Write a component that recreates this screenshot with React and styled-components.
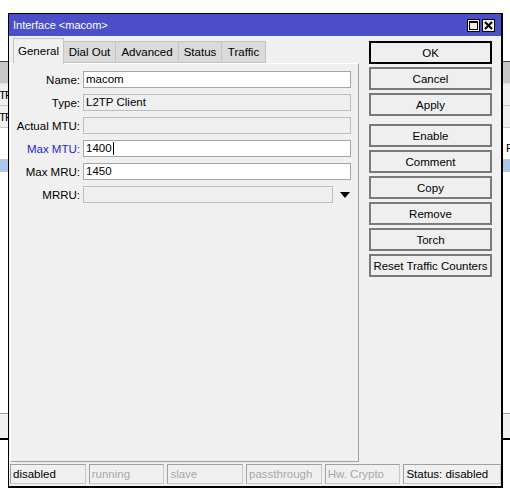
import React from 'react';
import styled, { createGlobalStyle } from 'styled-components';

const fields = [
  { label: 'Name', value: 'macom', editable: true },
  { label: 'Type', value: 'L2TP Client' },
  { label: 'Actual MTU', value: '' },
  { label: 'Max MTU', value: '1400', editable: true, active: true },
  { label: 'Max MRU', value: '1450', editable: true },
  { label: 'MRRU', value: '', drop: true },
];

const tabs = [
  { name: 'General', w: 51 },
  { name: 'Dial Out', w: 52 },
  { name: 'Advanced', w: 63 },
  { name: 'Status', w: 43 },
  { name: 'Traffic', w: 44 },
];

const buttons = [
  ['OK', 'Cancel', 'Apply'],
  ['Enable', 'Comment', 'Copy', 'Remove', 'Torch', 'Reset Traffic Counters'],
];

const status = [
  { text: 'disabled', on: true, w: 76 },
  { text: 'running', w: 76 },
  { text: 'slave', w: 76 },
  { text: 'passthrough', w: 76 },
  { text: 'Hw. Crypto', w: 76 },
  { text: 'Status: disabled', on: true, w: 98 },
];

const App = () => (
  <>
    <GlobalStyle />
    <Desktop>
      {/* 뒤쪽 창 */}
      <BackWindow>
        <BackHeader />
        <BackRow $bg="#f0f0f0" $h={22}>
          <span>TF</span>
        </BackRow>
        <BackRow $bg="#f0f0f0" $h={22}>
          <span>TP</span>
        </BackRow>
        <BackRow $bg="#fff" $h={32} $end>
          <span />
          <span>F</span>
        </BackRow>
        <BackRow $bg="#a9c6ec" $h={12} />
      </BackWindow>

      <Dialog>
        <TitleBar>
          <span>Interface &lt;macom&gt;</span>
          <TitleButtons>
            <TitleBtn>
              <svg width="11" height="11" viewBox="0 0 11 11">
                <rect x="1.5" y="1.5" width="8" height="8" fill="none" stroke="#000" />
                <rect x="1" y="1" width="9" height="2" fill="#000" />
              </svg>
            </TitleBtn>
            <TitleBtn>
              <svg width="11" height="11" viewBox="0 0 11 11">
                <path d="M2 2 L9 9 M9 2 L2 9" stroke="#000" strokeWidth="2" />
              </svg>
            </TitleBtn>
          </TitleButtons>
        </TitleBar>

        <Body>
          <LeftColumn>
            <TabRow>
              {tabs.map((t, i) => (
                <Tab key={t.name} $active={i === 0} $w={t.w}>
                  {t.name}
                </Tab>
              ))}
            </TabRow>
            <Panel>
              {fields.map((f) => (
                <FieldRow key={f.label}>
                  <Label $active={f.active}>{f.label}:</Label>
                  <Input $editable={f.editable} $drop={f.drop}>
                    {f.value}
                    {f.active && <Caret />}
                  </Input>
                  {f.drop && <DropArrow />}
                </FieldRow>
              ))}
            </Panel>
          </LeftColumn>

          <ButtonColumn>
            {buttons.map((group, gi) => (
              <ButtonGroup key={gi}>
                {group.map((b) => (
                  <Button key={b} $default={b === 'OK'}>
                    {b}
                  </Button>
                ))}
              </ButtonGroup>
            ))}
          </ButtonColumn>
        </Body>

        <StatusBar>
          {status.map((s) => (
            <StatusCell key={s.text} $on={s.on} $w={s.w}>
              {s.text}
            </StatusCell>
          ))}
        </StatusBar>
      </Dialog>
    </Desktop>
  </>
);

const GlobalStyle = createGlobalStyle`
  html, body {
    margin: 0;
    padding: 0;
    background: #fff;
  }
  body {
    font-family: "Liberation Sans", Arial, sans-serif;
    font-size: 11px;
    color: #000;
  }
`;

const Desktop = styled.div`
  position: relative;
  width: 510px;
  height: 496px;
  overflow: hidden;
`;

const BackWindow = styled.div`
  position: absolute;
  left: -4px;
  top: 61px;
  width: 518px;
  height: 376px;
  background: #fff;
  border-top: 1px solid #444;
  border-bottom: 2px solid #000;
  box-shadow: inset 0 -24px 0 #f0f0f0, inset 0 -25px 0 #a0a0a0;
  display: flex;
  flex-direction: column;
`;

const BackHeader = styled.div`
  height: 21px;
  background: #c8c8c8;
  border-bottom: 1px solid #e0e0e0;
`;

const BackRow = styled.div`
  height: ${(p) => p.$h}px;
  box-sizing: border-box;
  background: ${(p) => p.$bg};
  border-bottom: 1px solid #c8c8c8;
  display: flex;
  justify-content: space-between;
  align-items: ${(p) => (p.$end ? 'flex-end' : 'center')};
  padding: 0 2px ${(p) => (p.$end ? 5 : 0)}px 3px;
  font-size: 11.5px;
  letter-spacing: -1px;
`;

const Dialog = styled.div`
  position: absolute;
  left: 8px;
  top: 13px;
  width: 492px;
  height: 472px;
  background: #f0f0f0;
  border: 1px solid #000;
  border-right-width: 2px;
  border-bottom-width: 2px;
  display: flex;
  flex-direction: column;
`;

const TitleBar = styled.div`
  height: 22px;
  background: #4b50c8;
  color: #fff;
  font-size: 11px;
  display: flex;
  align-items: center;
  justify-content: space-between;
  padding: 0 6px 0 4px;
  flex-shrink: 0;
`;

const TitleButtons = styled.div`
  display: flex;
  gap: 2px;
`;

const TitleBtn = styled.div`
  width: 13px;
  height: 13px;
  background: #f0f0f0;
  border: 1px solid #000;
  box-sizing: border-box;
  display: flex;
  align-items: center;
  justify-content: center;
`;

const Body = styled.div`
  flex: 1;
  display: flex;
  padding: 1px 0 0 1px;
  min-height: 0;
`;

const LeftColumn = styled.div`
  width: 349px;
  display: flex;
  flex-direction: column;
`;

const TabRow = styled.div`
  display: flex;
  align-items: flex-end;
  height: 26px;
  padding-left: 3px;
  position: relative;
  z-index: 1;
`;

const Tab = styled.div`
  width: ${(p) => p.$w}px;
  height: ${(p) => (p.$active ? 26 : 22)}px;
  box-sizing: border-box;
  display: flex;
  align-items: center;
  justify-content: center;
  font-size: 11.5px;
  white-space: nowrap;
  background: ${(p) => (p.$active ? '#f0f0f0' : '#dadada')};
  border: 1px solid #c4c4c4;
  border-bottom: ${(p) => (p.$active ? '1px solid #f0f0f0' : '1px solid #c4c4c4')};
  margin-bottom: ${(p) => (p.$active ? -1 : 0)}px;
  & + & {
    border-left: none;
  }
`;

const Panel = styled.div`
  flex: 1;
  border: 1px solid #c4c4c4;
  border-left-color: #fff;
  border-top-color: #fff;
  border-right-color: #a0a0a0;
  border-bottom-color: #a0a0a0;
  padding: 7px 0 0 0;
  display: flex;
  flex-direction: column;
  gap: 6px;
`;

const FieldRow = styled.div`
  display: flex;
  align-items: center;
  height: 17px;
`;

const Label = styled.div`
  width: 69px;
  text-align: right;
  padding-right: 3px;
  font-size: 11.5px;
  color: ${(p) => (p.$active ? '#1d24e0' : '#000')};
`;

const Input = styled.div`
  width: ${(p) => (p.$drop ? 250 : 268)}px;
  height: 17px;
  box-sizing: border-box;
  border: 1px solid ${(p) => (p.$editable ? '#a6a6a6' : '#bdbdbd')};
  background: ${(p) => (p.$editable ? '#fff' : '#f0f0f0')};
  padding: 0 2px;
  font-size: 11.5px;
  line-height: 15px;
  display: flex;
  align-items: center;
  color: #000;
`;

const Caret = styled.span`
  display: inline-block;
  width: 1px;
  height: 13px;
  background: #000;
  margin-left: 1px;
`;

const DropArrow = styled.span`
  margin-left: 7px;
  width: 0;
  height: 0;
  border-left: 5px solid transparent;
  border-right: 5px solid transparent;
  border-top: 6px solid #000;
`;

const ButtonColumn = styled.div`
  margin-left: 10px;
  padding-top: 4px;
  width: 123px;
  display: flex;
  flex-direction: column;
  gap: 8px;
`;

const ButtonGroup = styled.div`
  display: flex;
  flex-direction: column;
  gap: 3px;
`;

const Button = styled.div`
  height: 23px;
  box-sizing: border-box;
  border: ${(p) => (p.$default ? '2px solid #000' : '2px solid #7a7a7a')};
  background: #efefef;
  display: flex;
  align-items: center;
  justify-content: center;
  font-size: 11.5px;
  white-space: nowrap;
  color: #000;
`;

const StatusBar = styled.div`
  display: flex;
  gap: 3px;
  height: 24px;
  padding: 2px 0 0 1px;
  box-sizing: border-box;
  flex-shrink: 0;
`;

const StatusCell = styled.div`
  width: ${(p) => p.$w}px;
  height: 20px;
  box-sizing: border-box;
  border: 1px solid #c8c8c8;
  border-top-color: #a0a0a0;
  border-left-color: #a0a0a0;
  padding: 0 2px;
  display: flex;
  align-items: center;
  font-size: 11.5px;
  white-space: nowrap;
  color: ${(p) => (p.$on ? '#000' : '#a8a8a8')};
`;

export default App;
